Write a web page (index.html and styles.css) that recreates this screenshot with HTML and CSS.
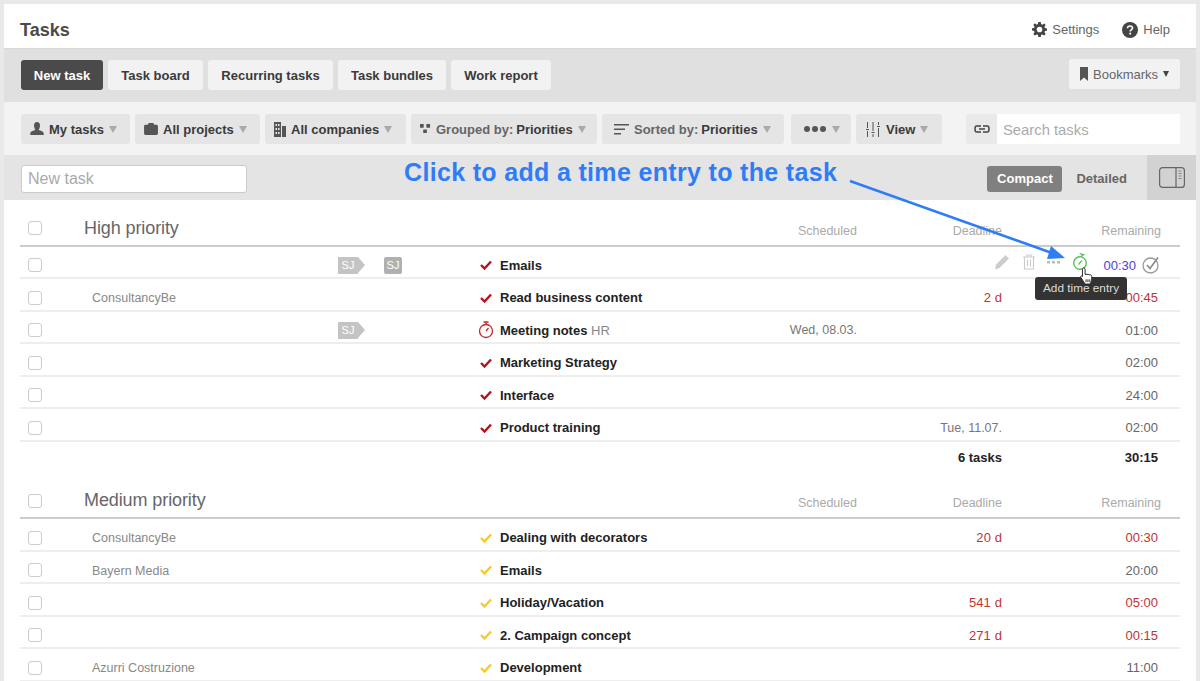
FILE: index.html
```html
<!DOCTYPE html>
<html lang="en">
<head>
    <meta charset="UTF-8">
    <title>Tasks</title>
    <link rel="stylesheet" href="styles.css">
</head>
<body>
    <div class="app">
        <header class="title-bar">
            <h1>Tasks</h1>
            <div class="title-links">
                <span class="title-link">
                    <svg width="15" height="15" viewBox="0 0 16 16"><path fill="#444" fill-rule="evenodd" d="M6.7 0h2.600l.4 2.200 1.300.6L12.900 1.500l1.700 1.700-1.300 1.900.5 1.300 2.200.4v2.400l-2.200.4-.5 1.300 1.300 1.900-1.700 1.700-1.900-1.300-1.300.5-.4 2.300H6.700l-.4-2.300-1.300-.5-1.900 1.300-1.700-1.700 1.300-1.900-.5-1.300L0 9.100V6.700l2.200-.4.500-1.300-1.300-1.900 1.700-1.700L5 2.800l1.300-.6zM8 5a3 3 0 1 0 0 6 3 3 0 0 0 0-6z"/></svg>
                    Settings
                </span>
                <span class="title-link">
                    <svg width="16" height="16" viewBox="0 0 16 16"><circle cx="8" cy="8" r="8" fill="#444"/><path d="M5.500 6.200C5.600 4.800 6.600 4 8 4c1.500 0 2.500.9 2.500 2.100 0 1.900-2.300 1.800-2.300 3.400" fill="none" stroke="#fff" stroke-width="1.600"/><rect x="7.300" y="10.700" width="1.800" height="1.800" fill="#fff"/></svg>
                    Help
                </span>
            </div>
        </header>

        <nav class="tab-bar">
            <a class="tab tab-active">New task</a>
            <a class="tab">Task board</a>
            <a class="tab">Recurring tasks</a>
            <a class="tab">Task bundles</a>
            <a class="tab">Work report</a>
            <a class="bookmarks">
                <svg width="8" height="14" viewBox="0 0 8 14"><path fill="#555" d="M0 0h8v14L4 10.500 0 14z"/></svg>
                Bookmarks <i class="caret caret-dark"></i>
            </a>
        </nav>

        <div class="filter-bar">
            <a class="filter f-my">
                <svg width="14" height="14" viewBox="0 0 14 14"><path fill="#555" d="M7 0c2 0 3 1.500 3 3.500S9 7 8.700 8c1.500.6 5 1.300 5 3.500V13H.300v-1.500C.300 9.300 3.800 8.600 5.300 8 5 7 4 5.500 4 3.500S5 0 7 0z"/></svg>
                My tasks <i class="caret"></i>
            </a>
            <a class="filter f-projects">
                <svg width="14" height="12" viewBox="0 0 15 13"><path fill="#555" d="M5 0h5l1 2h2.500c.8 0 1.500.7 1.500 1.500V11.500c0 .8-.7 1.500-1.500 1.500h-12C.7 13 0 12.300 0 11.500V3.500C0 2.700.7 2 1.500 2H4z"/></svg>
                All projects <i class="caret"></i>
            </a>
            <a class="filter f-companies">
                <svg width="12" height="15" viewBox="0 0 12 15"><path fill="#555" fill-rule="evenodd" d="M0 0h7v15H0zM8 4h4v11H8zM1.500 2v2h1.500V2zM4 2v2h1.500V2zM1.500 6v2h1.500V6zM4 6v2h1.500V6zM1.500 10v2h1.500v-2zM4 10v2h1.500v-2z"/></svg>
                All companies <i class="caret"></i>
            </a>
            <a class="filter f-grouped">
                <svg width="11" height="10" viewBox="0 0 12 11"><path fill="#555" d="M0 0h4v4H0zM7 0h4v4H7zM3.500 6h4v4h-4z"/></svg>
                <span class="muted">Grouped by:</span> Priorities <i class="caret"></i>
            </a>
            <a class="filter f-sorted">
                <svg width="15" height="11" viewBox="0 0 15 11"><path fill="#555" d="M0 0h15v1.500H0zM0 4.500h11V6H0zM0 9h7v1.500H0z"/></svg>
                <span class="muted">Sorted by:</span> Priorities <i class="caret"></i>
            </a>
            <a class="filter f-more"><span class="dots"><i></i><i></i><i></i></span> <i class="caret"></i></a>
            <a class="filter f-view">
                <svg width="16" height="15" viewBox="0 0 16 15"><path fill="none" stroke="#555" d="M2.500 0v6M2.500 9v6M8 0v9M8 12v3M13.500 0v3M13.500 6v9M1 7.500h3M6.500 10.500h3M12 4.500h3"/></svg>
                View <i class="caret"></i>
            </a>
            <div class="search">
                <span class="search-icon">
                    <svg width="16" height="8" viewBox="0 0 16 8"><path fill="none" stroke="#444" stroke-width="1.500" d="M7 1H2.500C1.500 1 1 2 1 4s.5 3 1.500 3H7M9 1h4.500C14.500 1 15 2 15 4s-.5 3-1.500 3H9M5 4h6"/></svg>
                </span>
                <input class="search-input" placeholder="Search tasks">
            </div>
        </div>

        <div class="add-bar">
            <input class="new-task" placeholder="New task">
            <div class="mode">
                <span class="mode-on">Compact</span>
                <span class="mode-off">Detailed</span>
            </div>
            <div class="panel-toggle">
                <svg width="26" height="21" viewBox="0 0 26 21"><rect x=".6" y=".6" width="24.800" height="19.800" rx="3" fill="none" stroke="#666" stroke-width="1.200"/><path d="M17 1v19" stroke="#666" stroke-width="1.200"/><path d="M19.500 4h3M19.500 6.500h3M19.500 9h3M19.500 11.500h3" stroke="#888"/></svg>
            </div>
        </div>

        <section class="group">
            <div class="group-head">
                <i class="check"></i>
                <h2>High priority</h2>
                <span class="col-scheduled">Scheduled</span>
                <span class="col-deadline">Deadline</span>
                <span class="col-remaining">Remaining</span>
            </div>
            <div class="row">
                <i class="check"></i><span></span>
                <span class="tag tag-arrow">SJ</span><span class="tag">SJ</span>
                <svg class="tick" viewBox="0 0 12 10"><path d="M1 5l3.500 3.500L11 1.500" fill="none" stroke="#b5121b" stroke-width="2.400"/></svg>
                <span class="name">Emails</span><span></span><span></span>
                <span class="time time-blue">00:30</span>
                <svg class="done" width="18" height="18" viewBox="0 0 18 18"><circle cx="8.500" cy="9.500" r="7.500" fill="none" stroke="#999" stroke-width="1.300"/><path d="M5 9l3 3.500L16 1.500" fill="none" stroke="#888" stroke-width="1.600"/></svg>
            </div>
            <div class="row">
                <i class="check"></i><span class="company">ConsultancyBe</span><span></span><span></span>
                <svg class="tick" viewBox="0 0 12 10"><path d="M1 5l3.500 3.500L11 1.500" fill="none" stroke="#b5121b" stroke-width="2.400"/></svg>
                <span class="name">Read business content</span><span></span>
                <span class="date red">2 d</span><span class="time red">00:45</span><span></span>
            </div>
            <div class="row">
                <i class="check"></i><span></span><span class="tag tag-arrow">SJ</span><span></span>
                <svg class="tick tick-watch" viewBox="0 0 16 18"><circle cx="8" cy="10" r="6.500" fill="none" stroke="#c0282d" stroke-width="1.300"/><path d="M5.500 1h5M8 1v3M8 10l2.500-3" fill="none" stroke="#c0282d" stroke-width="1.300"/></svg>
                <span class="name">Meeting notes <span class="hint">HR</span></span>
                <span class="date">Wed, 08.03.</span><span></span><span class="time">01:00</span><span></span>
            </div>
            <div class="row">
                <i class="check"></i><span></span><span></span><span></span>
                <svg class="tick" viewBox="0 0 12 10"><path d="M1 5l3.500 3.500L11 1.500" fill="none" stroke="#b5121b" stroke-width="2.400"/></svg>
                <span class="name">Marketing Strategy</span><span></span><span></span><span class="time">02:00</span><span></span>
            </div>
            <div class="row">
                <i class="check"></i><span></span><span></span><span></span>
                <svg class="tick" viewBox="0 0 12 10"><path d="M1 5l3.500 3.500L11 1.500" fill="none" stroke="#b5121b" stroke-width="2.400"/></svg>
                <span class="name">Interface</span><span></span><span></span><span class="time">24:00</span><span></span>
            </div>
            <div class="row">
                <i class="check"></i><span></span><span></span><span></span>
                <svg class="tick" viewBox="0 0 12 10"><path d="M1 5l3.500 3.500L11 1.500" fill="none" stroke="#b5121b" stroke-width="2.400"/></svg>
                <span class="name">Product training</span><span></span>
                <span class="date">Tue, 11.07.</span><span class="time">02:00</span><span></span>
            </div>
            <div class="totals">
                <strong>6 tasks</strong>
                <strong>30:15</strong>
            </div>
        </section>

        <section class="group">
            <div class="group-head">
                <i class="check"></i>
                <h2>Medium priority</h2>
                <span class="col-scheduled">Scheduled</span>
                <span class="col-deadline">Deadline</span>
                <span class="col-remaining">Remaining</span>
            </div>
            <div class="row">
                <i class="check"></i><span class="company">ConsultancyBe</span><span></span><span></span>
                <svg class="tick" viewBox="0 0 12 10"><path d="M1 5l3.500 3.500L11 1.500" fill="none" stroke="#f5c92e" stroke-width="2.400"/></svg>
                <span class="name">Dealing with decorators</span><span></span>
                <span class="date red">20 d</span><span class="time red">00:30</span><span></span>
            </div>
            <div class="row">
                <i class="check"></i><span class="company">Bayern Media</span><span></span><span></span>
                <svg class="tick" viewBox="0 0 12 10"><path d="M1 5l3.500 3.500L11 1.500" fill="none" stroke="#f5c92e" stroke-width="2.400"/></svg>
                <span class="name">Emails</span><span></span><span></span><span class="time">20:00</span><span></span>
            </div>
            <div class="row">
                <i class="check"></i><span></span><span></span><span></span>
                <svg class="tick" viewBox="0 0 12 10"><path d="M1 5l3.500 3.500L11 1.500" fill="none" stroke="#f5c92e" stroke-width="2.400"/></svg>
                <span class="name">Holiday/Vacation</span><span></span>
                <span class="date red">541 d</span><span class="time red">05:00</span><span></span>
            </div>
            <div class="row">
                <i class="check"></i><span></span><span></span><span></span>
                <svg class="tick" viewBox="0 0 12 10"><path d="M1 5l3.500 3.500L11 1.500" fill="none" stroke="#f5c92e" stroke-width="2.400"/></svg>
                <span class="name">2. Campaign concept</span><span></span>
                <span class="date red">271 d</span><span class="time red">00:15</span><span></span>
            </div>
            <div class="row">
                <i class="check"></i><span class="company">Azurri Costruzione</span><span></span><span></span>
                <svg class="tick" viewBox="0 0 12 10"><path d="M1 5l3.500 3.500L11 1.500" fill="none" stroke="#f5c92e" stroke-width="2.400"/></svg>
                <span class="name">Development</span><span></span><span></span><span class="time">11:00</span><span></span>
            </div>
        </section>
    </div>

    <!-- row action icons, tooltip and the callout lie over the list -->
    <div class="row-actions">
        <svg width="16" height="16" viewBox="0 0 16 16"><path fill="#ccc" d="M11.500 1l3.500 3.500-9.500 9.500L1 15.500 2 10.500z"/></svg>
        <svg width="14" height="16" viewBox="0 0 14 16"><path fill="none" stroke="#ccc" stroke-width="1.200" d="M1 3h12M5 3V1h4v2M2.500 3v12h9V3M5.500 5.500v7M8.500 5.500v7"/></svg>
        <svg width="13" height="4" viewBox="0 0 13 4"><path fill="#bbb" d="M0 1h3v2.500H0zM5 1h3v2.500H5zM10 1h3v2.500h-3z"/></svg>
        <svg width="16" height="18" viewBox="0 0 16 18"><g transform="rotate(14 8 10)"><circle cx="8" cy="10" r="6.300" fill="none" stroke="#56c456" stroke-width="1.400"/><path d="M5.500 1h5M8 1v3" fill="none" stroke="#56c456" stroke-width="1.400"/></g><path d="M6.500 11.500l3.500-4" fill="none" stroke="#56c456" stroke-width="1.200"/></svg>
    </div>
    <div class="tooltip">Add time entry</div>
    <svg class="pointer" width="16" height="18" viewBox="0 0 16 19"><path fill="#fff" stroke="#222" d="M4.500 1c1 0 1.500.7 1.500 1.500V8l1-.5 1 .5 1.200-.3 1 .6 1.300-.2c1 .4 1.500 1 1.500 2V14l-1.500 4H6L1.500 11c-.6-1 .5-2.200 1.500-1.500L3.200 10V2.500C3.200 1.700 3.700 1 4.500 1z"/><path stroke="#222" d="M7 13v3M9 13v3M11 13v3"/></svg>
    <div class="callout">Click to add a time entry to the task</div>
    <svg class="callout-arrow" width="1200" height="681" viewBox="0 0 1200 681"><path d="M850 181L1052 253" stroke="#2f7df6" stroke-width="2.500" fill="none"/><path d="M1065 258L1047 259 1051 246z" fill="#2f7df6"/></svg>
</body>
</html>
```

FILE: styles.css
```css
* {
    box-sizing: border-box;
}
html, body {
    height: 681px;
    overflow: hidden;
}
body {
    margin: 0;
    padding: 4px 4px 0;
    background-color: #e9e9e9;
    font-family: "Liberation Sans", Arial, sans-serif;
    font-size: 13px;
    color: #333;
}
.app {
    background-color: white;
    height: 677px;
    overflow: hidden;
}
a {
    display: flex;
    align-items: center;
}

/* title */
.title-bar {
    height: 44px;
    display: flex;
    justify-content: space-between;
    align-items: center;
    padding: 8px 26px 0 16px;
}
.title-bar h1 {
    margin: 0;
    font-size: 18px;
    color: #4a4a4a;
}
.title-links {
    display: flex;
    gap: 23px;
    margin-top: -1px;
    color: #666;
}
.title-link {
    display: flex;
    align-items: center;
    gap: 5px;
}

/* tabs */
.tab-bar {
    height: 54px;
    background-color: #e0e0e0;
    border-top: 1px solid #d8d8d8;
    display: flex;
    gap: 5px;
    align-items: center;
    padding: 0 16px 1px 17px;
}
.tab {
    height: 30px;
    width: 95px;
    justify-content: center;
    border-radius: 3px;
    background-color: #f2f2f2;
    font-weight: bold;
    color: #3a3a3a;
    white-space: nowrap;
}
.tab-active {
    width: 82px;
    background-color: #4a4a4a;
    color: white;
}
.tab:nth-child(3) { width: 125px; }
.tab:nth-child(4) { width: 108px; }
.tab:nth-child(5) { width: 100px; }
.bookmarks {
    height: 30px;
    width: 111px;
    margin-left: auto;
    margin-top: -2px;
    padding-left: 11px;
    gap: 5px;
    border-radius: 3px;
    background-color: #f2f2f2;
    color: #666;
}

/* filters */
.filter-bar {
    height: 53px;
    background-color: #f3f3f3;
    display: flex;
    align-items: center;
    gap: 5px;
    padding: 1px 16px 0 17px;
}
.filter {
    height: 30px;
    gap: 5px;
    padding: 0 9px;
    border-radius: 3px;
    background-color: #e5e5e5;
    font-weight: bold;
    color: #3a3a3a;
    white-space: nowrap;
}
.filter .muted {
    color: #666;
    margin-right: -2px;
}
.f-my { width: 109px; }
.f-projects { width: 125px; }
.f-companies { width: 141px; }
.f-grouped { width: 186px; }
.f-sorted { width: 182px; padding-left: 12px; }
.f-more { width: 60px; margin-left: 2px; padding-left: 13px; }
.f-view { width: 86px; }
.dots {
    display: flex;
    gap: 2px;
    margin-right: 1px;
}
.dots i {
    width: 6px;
    height: 6px;
    border-radius: 50%;
    background-color: #555;
}
.caret {
    display: inline-block;
    width: 0;
    height: 0;
    border-left: 4px solid transparent;
    border-right: 4px solid transparent;
    border-top: 7px solid #aaa;
}
.caret-dark {
    border-left-width: 3px;
    border-right-width: 3px;
    border-top: 6px solid #444;
}
.search {
    margin-left: 19px;
    display: flex;
    height: 30px;
    width: 214px;
}
.search-icon {
    width: 31px;
    display: flex;
    align-items: center;
    justify-content: center;
    background-color: #e9e9e9;
    border-radius: 3px 0 0 3px;
}
input {
    border: 0;
    outline: 0;
    font-family: inherit;
    background-color: white;
}
input::placeholder {
    color: #aaa;
}
.search-input {
    flex: 1;
    min-width: 0;
    padding: 2px 6px 0;
    font-size: 14.800px;
}

/* new task line */
.add-bar {
    height: 45px;
    background-color: #e4e4e4;
    display: flex;
    align-items: center;
    padding-left: 17px;
}
.new-task {
    width: 226px;
    height: 28px;
    margin-top: 2px;
    padding: 0 6px;
    border: 1px solid #ccc;
    border-radius: 3px;
    font-size: 16px;
}
.mode {
    margin-left: auto;
    margin-top: 2px;
    display: flex;
    align-items: center;
    font-weight: bold;
}
.mode-on {
    width: 75px;
    height: 26px;
    line-height: 26px;
    text-align: center;
    border-radius: 3px;
    background-color: #808080;
    color: white;
}
.mode-off {
    margin: 0 20px 0 14px;
    color: #666;
}
.panel-toggle {
    width: 49px;
    height: 45px;
    background-color: #d2d2d2;
    display: flex;
    align-items: center;
    justify-content: center;
}

/* task list */
.group {
    margin: 0 16px;
}
.group-head {
    display: flex;
    align-items: center;
    height: 46.500px;
    padding-top: 12px;
    border-bottom: 2px solid #ccc;
    color: #aaa;
    font-size: 12.500px;
}
.group-head .check {
    margin-right: 42px;
}
.group-head h2 {
    margin: 0;
    flex: 1;
    font-size: 18px;
    font-weight: normal;
    color: #666;
    letter-spacing: -.1px;
}
.col-scheduled, .col-deadline, .col-remaining {
    text-align: right;
    padding-top: 5px;
}
.col-scheduled { width: 100px; }
.col-deadline { width: 145px; }
.col-remaining { width: 159px; margin-right: 19px; }
.row {
    display: grid;
    grid-template-columns: 72px 246px 46px 96px 20px 220px 137px 145px 156px 22px;
    align-items: center;
    height: 32.500px;
    padding-top: 7px;
    border-bottom: 2px solid #eee;
}
.check {
    display: block;
    width: 14px;
    height: 14px;
    margin-left: 8px;
    border: 1px solid #ccc;
    border-radius: 3px;
}
.company {
    color: #888;
    font-size: 12.500px;
    padding-top: 1px;
}
.tag {
    justify-self: start;
    width: 18px;
    height: 17px;
    line-height: 17px;
    text-align: center;
    font-size: 11px;
    color: white;
    background-color: #b0b0b0;
    border-radius: 2px;
}
.tag-arrow {
    position: relative;
    width: 20px;
    border-radius: 0;
    background-color: #c4c4c4;
}
.tag-arrow::after {
    content: "";
    position: absolute;
    left: 20px;
    top: 0;
    border-left: 7px solid #c4c4c4;
    border-top: 8.500px solid transparent;
    border-bottom: 8.500px solid transparent;
}
.tick {
    width: 12px;
    height: 10px;
}
.tick-watch {
    width: 16px;
    height: 18px;
    margin-left: -2px;
}
.name {
    font-weight: bold;
    color: #222;
    white-space: nowrap;
}
.hint {
    font-weight: normal;
    color: #888;
}
.date {
    text-align: right;
    color: #777;
    font-size: 12.500px;
}
.time {
    text-align: right;
    color: #666;
}
.date.red {
    font-size: 13px;
    letter-spacing: .1px;
}
.red, .time.red {
    color: #c03434;
}
.time-blue {
    color: #4a45d8;
    padding-right: 22px;
}
.done {
    justify-self: start;
    margin-left: -16px;
}
.totals {
    height: 31px;
    display: grid;
    grid-template-columns: 982px 156px;
    align-items: center;
    text-align: right;
    color: #222;
}

/* overlays */
.row-actions {
    position: absolute;
    left: 994px;
    top: 253px;
    width: 94px;
    height: 18px;
    display: flex;
    align-items: center;
    justify-content: space-between;
}
.tooltip {
    position: absolute;
    left: 1035px;
    top: 277px;
    width: 92px;
    height: 23px;
    line-height: 23px;
    text-align: center;
    background-color: #333;
    color: #ddd;
    font-size: 11.800px;
    border-radius: 3px;
}
.pointer {
    position: absolute;
    left: 1079px;
    top: 267px;
}
.callout {
    position: absolute;
    left: 404px;
    top: 158px;
    font-size: 25px;
    font-weight: bold;
    letter-spacing: .33px;
    color: #2f7df6;
    white-space: nowrap;
}
.callout-arrow {
    position: absolute;
    left: 0;
    top: 0;
    pointer-events: none;
}
```
